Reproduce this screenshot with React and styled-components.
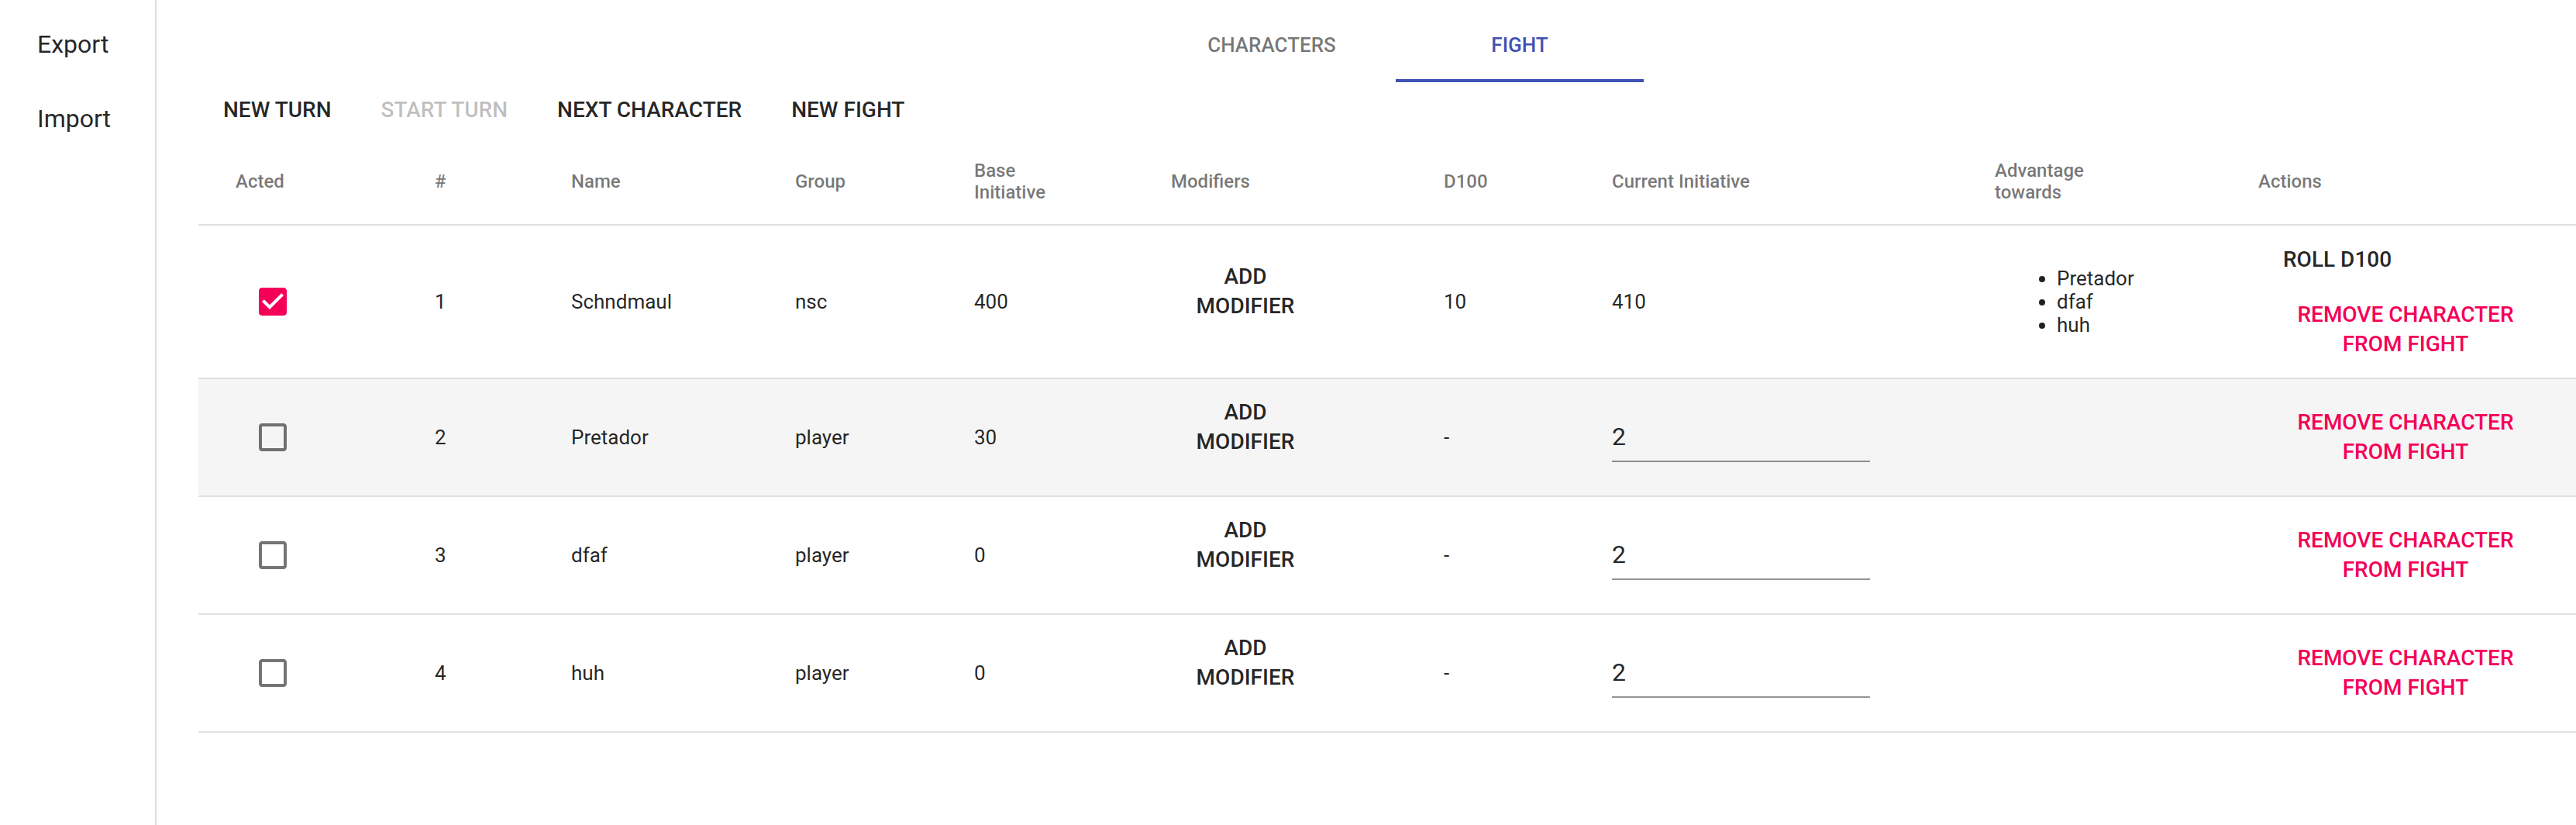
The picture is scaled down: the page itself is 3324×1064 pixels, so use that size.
import React from 'react';
import styled, { createGlobalStyle } from 'styled-components';

const GlobalStyle = createGlobalStyle`
  html, body {
    margin: 0;
    padding: 0;
    background: #ffffff;
    overflow: hidden;
  }
  body {
    font-family: Roboto, "Liberation Sans", Arial, sans-serif;
    color: rgba(0, 0, 0, 0.87);
  }
  *, *::before, *::after {
    box-sizing: border-box;
  }
`;

const COLS = '257px 176px 289px 231px 254px 352px 217px 494px 340px 540px';

const Layout = styled.div`
  display: flex;
  width: 3400px;
  min-height: 100vh;
`;

const Sidebar = styled.nav`
  flex: none;
  width: 202px;
  border-right: 2px solid #e0e0e0;
  background: #ffffff;
`;

const NavList = styled.ul`
  list-style: none;
  margin: 0;
  padding: 9px 0;
`;

const NavItem = styled.li`
  padding: 24px 48px;
  font-size: 32px;
  line-height: 48px;
  font-weight: 400;
  color: rgba(0, 0, 0, 0.87);
  cursor: pointer;
`;

const Main = styled.main`
  flex: none;
  width: 3198px;
  padding-top: 10px;
`;

const TabBar = styled.div`
  display: flex;
  justify-content: center;
`;

const Tab = styled.button`
  width: 320px;
  height: 96px;
  padding: 0;
  border: 0;
  background: transparent;
  font-family: Roboto, "Liberation Sans", Arial, sans-serif;
  font-size: 26px;
  font-weight: 500;
  line-height: 1.4;
  text-transform: uppercase;
  color: ${(p) => (p.$active ? '#3f51b5' : 'rgba(0, 0, 0, 0.54)')};
  box-shadow: ${(p) => (p.$active ? 'inset 0 -4px 0 #3f51b5' : 'none')};
  cursor: pointer;
`;

const Content = styled.div`
  padding-left: 54px;
`;

const Toolbar = styled.div`
  display: flex;
  align-items: center;
`;

const TextButton = styled.button`
  display: inline-flex;
  align-items: center;
  justify-content: center;
  min-width: 128px;
  min-height: 72px;
  padding: 16px 32px;
  border: 0;
  border-radius: 8px;
  background: transparent;
  font-family: Roboto, "Liberation Sans", Arial, sans-serif;
  font-size: 28px;
  font-weight: 500;
  line-height: 38px;
  text-transform: uppercase;
  text-align: center;
  color: ${(p) =>
    p.disabled
      ? 'rgba(0, 0, 0, 0.26)'
      : p.$tone === 'secondary'
      ? '#f50057'
      : 'rgba(0, 0, 0, 0.87)'};
  cursor: ${(p) => (p.disabled ? 'default' : 'pointer')};
`;

const Table = styled.div`
  width: 3150px;
`;

const HeadRow = styled.div`
  display: grid;
  grid-template-columns: ${COLS};
  align-items: center;
  min-height: 113px;
  border-bottom: 2px solid #e0e0e0;
`;

const HeadCell = styled.div`
  padding: 8px 112px 8px 48px;
  font-size: 24px;
  font-weight: 500;
  line-height: normal;
  color: rgba(0, 0, 0, 0.54);
`;

const Row = styled.div`
  display: grid;
  grid-template-columns: ${COLS};
  align-items: center;
  border-bottom: 2px solid #e0e0e0;
  background: ${(p) => (p.$highlight ? '#f5f5f5' : '#ffffff')};
`;

const Cell = styled.div`
  padding: 8px 112px 8px 48px;
  font-size: 26px;
  font-weight: 400;
  line-height: normal;
  color: rgba(0, 0, 0, 0.87);
`;

const StackCell = styled(Cell)`
  display: flex;
  flex-direction: column;
  align-items: flex-start;
`;

const CheckboxButton = styled.span`
  display: inline-flex;
  padding: 24px;
  color: ${(p) => (p.$checked ? '#f50057' : 'rgba(0, 0, 0, 0.54)')};
  svg {
    display: block;
    width: 48px;
    height: 48px;
    fill: currentColor;
  }
`;

const ModifierList = styled.ul`
  margin: 0;
  padding: 0;
  min-height: 26px;
  list-style: none;
`;

const InputField = styled.div`
  width: 333px;
  border-bottom: 2px solid rgba(0, 0, 0, 0.42);
`;

const Input = styled.input`
  display: block;
  box-sizing: content-box;
  width: 100%;
  height: 38px;
  padding: 12px 0 12px;
  margin: 0;
  border: 0;
  outline: none;
  background: transparent;
  font-family: Roboto, "Liberation Sans", Arial, sans-serif;
  font-size: 32px;
  line-height: 38px;
  color: rgba(0, 0, 0, 0.87);
`;

const AdvantageList = styled.ul`
  margin: 26px 0;
  padding-left: 80px;
  font-size: 26px;
  line-height: normal;
`;

const Checkbox = ({ checked }) => (
  <CheckboxButton $checked={checked}>
    {checked ? (
      <svg viewBox="0 0 24 24">
        <path d="M19 3H5c-1.11 0-2 .9-2 2v14c0 1.1.89 2 2 2h14c1.11 0 2-.9 2-2V5c0-1.1-.89-2-2-2zm-9 14l-5-5 1.41-1.41L10 14.17l7.59-7.59L19 8l-9 9z" />
      </svg>
    ) : (
      <svg viewBox="0 0 24 24">
        <path d="M19 5v14H5V5h14m0-2H5c-1.11 0-2 .9-2 2v14c0 1.1.89 2 2 2h14c1.1 0 2-.9 2-2V5c0-1.1-.9-2-2-2z" />
      </svg>
    )}
  </CheckboxButton>
);

const fighters = [
  {
    id: 1,
    name: 'Schndmaul',
    group: 'nsc',
    base: 400,
    d100: '10',
    current: '410',
    acted: true,
    advantage: ['Pretador', 'dfaf', 'huh'],
    active: true,
  },
  { id: 2, name: 'Pretador', group: 'player', base: 30, d100: '-', input: '2', highlight: true },
  { id: 3, name: 'dfaf', group: 'player', base: 0, d100: '-', input: '2' },
  { id: 4, name: 'huh', group: 'player', base: 0, d100: '-', input: '2' },
];

const headers = [
  'Acted',
  '#',
  'Name',
  'Group',
  'Base Initiative',
  'Modifiers',
  'D100',
  'Current Initiative',
  'Advantage towards',
  'Actions',
];

export default function App() {
  return (
    <>
      <GlobalStyle />
      <Layout>
        <Sidebar>
          <NavList>
            <NavItem>Export</NavItem>
            <NavItem>Import</NavItem>
          </NavList>
        </Sidebar>
        <Main>
          <TabBar>
            <Tab>Characters</Tab>
            <Tab $active>Fight</Tab>
          </TabBar>
          <Content>
            <Toolbar>
              <TextButton>New Turn</TextButton>
              <TextButton disabled>Start Turn</TextButton>
              <TextButton>Next Character</TextButton>
              <TextButton>New Fight</TextButton>
            </Toolbar>
            <Table>
              <HeadRow>
                {headers.map((h) => (
                  <HeadCell key={h}>{h}</HeadCell>
                ))}
              </HeadRow>
              {fighters.map((f) => (
                <Row key={f.id} $highlight={f.highlight}>
                  <Cell>
                    <Checkbox checked={!!f.acted} />
                  </Cell>
                  <Cell>{f.id}</Cell>
                  <Cell>{f.name}</Cell>
                  <Cell>{f.group}</Cell>
                  <Cell>{f.base}</Cell>
                  <StackCell>
                    <TextButton>Add Modifier</TextButton>
                    <ModifierList />
                  </StackCell>
                  <Cell>{f.d100}</Cell>
                  <Cell>
                    {f.input ? (
                      <InputField>
                        <Input defaultValue={f.input} />
                      </InputField>
                    ) : (
                      f.current
                    )}
                  </Cell>
                  <Cell>
                    {f.advantage && (
                      <AdvantageList>
                        {f.advantage.map((a) => (
                          <li key={a}>{a}</li>
                        ))}
                      </AdvantageList>
                    )}
                  </Cell>
                  <StackCell>
                    {f.active && <TextButton>Roll D100</TextButton>}
                    <TextButton $tone="secondary">Remove Character from Fight</TextButton>
                  </StackCell>
                </Row>
              ))}
            </Table>
          </Content>
        </Main>
      </Layout>
    </>
  );
}
